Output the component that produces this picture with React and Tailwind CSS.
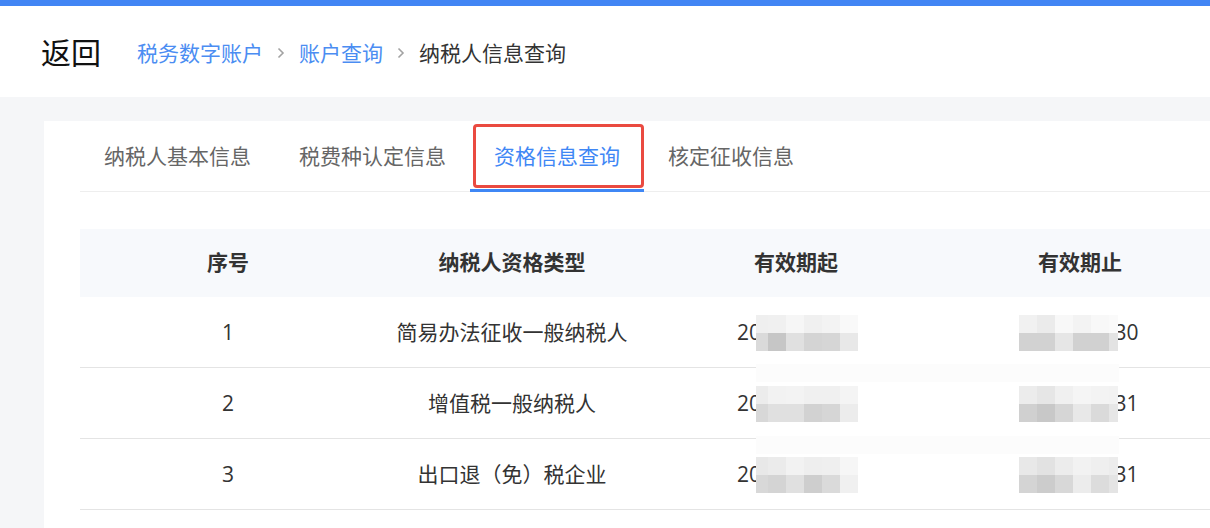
import React from 'react'

const FONT = { fontFamily: '"Open Sans", "Noto Sans CJK SC", sans-serif' }

const tabs = ['纳税人基本信息', '税费种认定信息', '资格信息查询', '核定征收信息']

// mosaic colours: [top row, bottom row] for 起 / 止 of each row
const rows = [
  {
    no: '1',
    type: '简易办法征收一般纳税人',
    tail: '30',
    start: [
      ['#efefef', '#f0f0f0', '#f6f6f6', '#f0f0f0', '#f3f3f3', '#f9f9f9'],
      ['#dadada', '#c6c6c6', '#e0e0e0', '#d4d4d4', '#d6d6d6', '#e8e8e8'],
    ],
    end: [
      ['#f1f1f1', '#ebebeb', '#f8f8f8', '#f3f3f3', '#f8f8f8', '#fafafa'],
      ['#d2d2d2', '#d2d2d2', '#e6e6e6', '#d1d1d1', '#d1d1d1', '#e3e3e3'],
    ],
  },
  {
    no: '2',
    type: '增值税一般纳税人',
    tail: '31',
    start: [
      ['#ececec', '#f2f2f2', '#f3f3f3', '#f0f0f0', '#f0f0f0', '#f4f4f4'],
      ['#d8d8d8', '#e0e0e0', '#e0e0e0', '#d2d2d2', '#d6d6d6', '#ececec'],
    ],
    end: [
      ['#ececec', '#e6e6e6', '#f0f0f0', '#f5f5f5', '#f3f3f3', '#f2f2f2'],
      ['#d0d0d0', '#c8c8c8', '#d6d6d6', '#e8e8e8', '#dadada', '#e6e6e6'],
    ],
  },
  {
    no: '3',
    type: '出口退（免）税企业',
    tail: '31',
    start: [
      ['#e8e8e8', '#ebebeb', '#f2f2f2', '#eeeeee', '#efefef', '#f6f6f6'],
      ['#d8d8d8', '#d4d4d4', '#e0e0e0', '#cecece', '#dadada', '#f0f0f0'],
    ],
    end: [
      ['#e8e8e8', '#e2e2e2', '#ececec', '#f2f2f2', '#efefef', '#ececec'],
      ['#d4d4d4', '#cccccc', '#d8d8d8', '#ececec', '#dcdcdc', '#e4e4e4'],
    ],
  },
]

const startWidths = [12, 18, 18, 18, 18, 18]
const endWidths = [18, 18, 18, 18, 18, 9]

function Mosaic({ colors, widths }) {
  return (
    <div className="relative z-10 flex flex-col">
      {colors.map((line, i) => (
        <div key={i} className="flex h-[18px]">
          {line.map((c, j) => (
            <div key={j} className="h-full" style={{ width: widths[j], background: c }} />
          ))}
        </div>
      ))}
    </div>
  )
}

export default function App() {
  return (
    <div className="w-[1210px] h-[528px] overflow-hidden bg-[#f5f6f8] text-[#333]" style={FONT}>
      <div className="h-[6px] bg-[#4285f4]" />

      {/* header / breadcrumb */}
      <div className="h-[91px] bg-white flex items-center pl-[41px] pt-[3px]">
        <span className="text-[30px] text-[#111] leading-none">返回</span>
        <div className="flex items-center ml-[36px] text-[21px] leading-none">
          <span className="text-[#4b8df2]">税务数字账户</span>
          <svg width="10" height="12" viewBox="0 0 10 12" className="mx-[13px]">
            <path d="M2.5 1.5 L7 6 L2.5 10.5" fill="none" stroke="#a3a3a3" strokeWidth="1.6" />
          </svg>
          <span className="text-[#4b8df2]">账户查询</span>
          <svg width="10" height="12" viewBox="0 0 10 12" className="mx-[13px]">
            <path d="M2.5 1.5 L7 6 L2.5 10.5" fill="none" stroke="#a3a3a3" strokeWidth="1.6" />
          </svg>
          <span className="text-[#333]">纳税人信息查询</span>
        </div>
      </div>

      <div className="pt-[24px] pl-[44px] h-full">
        <div className="bg-white h-full pl-[36px]">
          {/* tabs */}
          <div className="flex h-[71px] border-b border-[#eeeeee] pt-[2px]">
            {tabs.map((t, i) => {
              const active = i === 2
              return (
                <div
                  key={t}
                  className={
                    'relative flex items-center px-6 text-[21px] ' +
                    (active ? 'text-[#3f87f5]' : 'text-[#666]')
                  }
                >
                  {t}
                  {active && (
                    <>
                      <div className="absolute left-0 right-0 bottom-[-1px] h-[3px] bg-[#3f87f5]" />
                      <div className="absolute left-[3px] right-0 top-[1px] bottom-[3px] border-[3px] border-[#ea4a40] rounded-[4px]" />
                    </>
                  )}
                </div>
              )
            })}
          </div>

          {/* table */}
          <div className="mt-[37px] text-[21px]">
            <div className="grid grid-cols-[290px_284px_284px_284px] h-[68px] bg-[#f7f9fc] font-bold text-[#333] items-center text-center">
              <div className="pl-[6px]">序号</div>
              <div>纳税人资格类型</div>
              <div>有效期起</div>
              <div>有效期止</div>
            </div>
            <div className="relative">
              {rows.map(r => (
                <div
                  key={r.no}
                  className="grid grid-cols-[290px_284px_284px_284px] h-[71px] border-b border-[#e4e4e4] items-center text-center text-[#333] pt-[2px]"
                >
                  <div className="pl-[6px]">{r.no}</div>
                  <div>{r.type}</div>
                  <div className="flex justify-center">
                    <div className="flex items-center pl-[3px]">
                      <span>20</span>
                      <div className="-ml-[5px]">
                        <Mosaic colors={r.start} widths={startWidths} />
                      </div>
                    </div>
                  </div>
                  <div className="flex justify-center">
                    <div className="flex items-center pr-[2px]">
                      <Mosaic colors={r.end} widths={endWidths} />
                      <span className="-ml-[4px]">{r.tail}</span>
                    </div>
                  </div>
                </div>
              ))}
              {/* faint redaction bands over the row lines */}
              <div className="absolute left-[676px] w-[363px] top-[67px] h-[18px] bg-[#fcfcfc]" />
              <div className="absolute left-[676px] w-[363px] top-[139px] h-[18px] bg-[#fcfcfc]" />
            </div>
          </div>
        </div>
      </div>
    </div>
  )
}
